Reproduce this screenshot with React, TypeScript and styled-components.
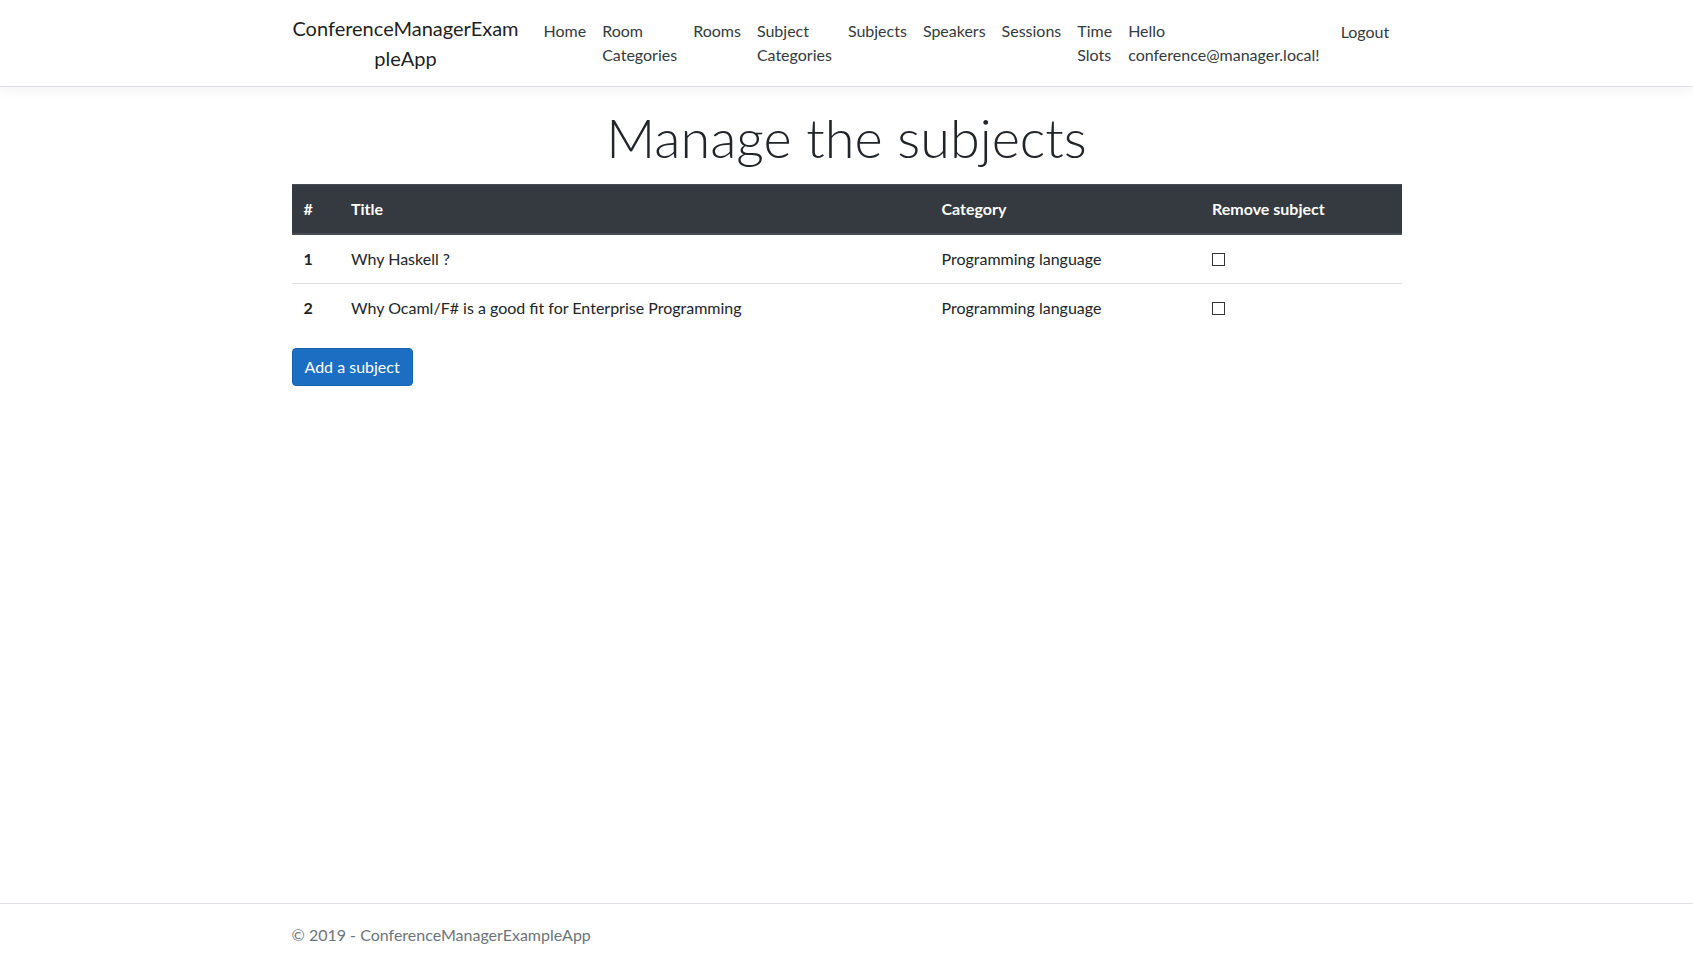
import React from "react";
import styled, { createGlobalStyle } from "styled-components";

const FONT = `"Segoe UI", Lato, "Liberation Sans", sans-serif`;

const GlobalStyle = createGlobalStyle`
  *, *::before, *::after { box-sizing: border-box; }
  html, body { margin: 0; padding: 0; }
  body {
    font-family: ${FONT};
    font-size: 16px;
    line-height: 1.5;
    color: #212529;
    background: #fff;
  }
`;

const Page = styled.div`
  min-height: 100vh;
  display: flex;
  flex-direction: column;
`;

const Container = styled.div`
  width: 100%;
  max-width: 1140px;
  margin: 0 auto;
  padding: 0 15px;
`;

const Navbar = styled.header`
  background: #fff;
  border-bottom: 1px solid #dee2e6;
  box-shadow: 0 4px 12px rgba(0, 0, 0, 0.05);
  margin-bottom: 16px;
  padding: 8px 16px;
`;

const NavInner = styled(Container)`
  display: flex;
  align-items: center;
`;

const Brand = styled.a`
  width: 228px;
  flex: none;
  margin-right: 16px;
  padding: 5px 0;
  font-size: 20px;
  line-height: 30px;
  text-align: center;
  color: rgba(0, 0, 0, 0.9);
  text-decoration: none;
`;

const NavList = styled.ul`
  display: flex;
  flex: 1;
  list-style: none;
  margin: 0;
  padding: 0;
`;

const UserList = styled.ul`
  display: flex;
  align-items: flex-start;
  list-style: none;
  margin: 0;
  padding: 0;
`;

const NavItem = styled.li`
  display: block;
`;

const NavLink = styled.a`
  display: block;
  padding: 8px;
  color: #343a40;
  text-decoration: none;
  line-height: 24px;
`;

const LogoutButton = styled.button`
  display: block;
  padding: 8px 12px 6px;
  margin: 0;
  border: 1px solid transparent;
  background: none;
  font-family: ${FONT};
  font-size: 16px;
  line-height: 24px;
  color: #343a40;
  cursor: pointer;
`;

const Main = styled(Container)`
  flex: 1;
  padding-bottom: 16px;
`;

const Title = styled.h1`
  margin: 0 0 13px;
  padding-top: 3px;
  text-align: center;
  font-size: 54px;
  font-weight: 300;
  line-height: 1.2;
  color: #212529;
`;

const Table = styled.table`
  width: 100%;
  table-layout: fixed;
  border-collapse: collapse;
  margin-bottom: 16px;
  color: #212529;
`;

const HeadCell = styled.th`
  padding: 12px;
  text-align: left;
  vertical-align: bottom;
  font-weight: 700;
  color: #fff;
  background: #343a40;
  border-top: 1px solid #454d55;
  border-bottom: 2px solid #454d55;
`;

const RowHead = styled.th`
  padding: 12px;
  text-align: left;
  vertical-align: top;
  font-weight: 700;
  border-top: 1px solid #dee2e6;
`;

const Cell = styled.td`
  padding: 12px;
  vertical-align: top;
  border-top: 1px solid #dee2e6;
`;

const Check = styled.input`
  appearance: none;
  -webkit-appearance: none;
  width: 13px;
  height: 13px;
  margin: 0;
  border: 1px solid #333;
  border-radius: 0;
  background: #fff;
  vertical-align: -1px;
`;

const PrimaryButton = styled.button`
  display: inline-block;
  padding: 6px 12px;
  font-family: ${FONT};
  font-size: 16px;
  line-height: 24px;
  color: #fff;
  background: #1b6ec2;
  border: 1px solid #1861ac;
  border-radius: 4px;
  cursor: pointer;
`;

const Footer = styled.footer`
  border-top: 1px solid #dee2e6;
  color: #6c757d;
  line-height: 60px;
  white-space: nowrap;
`;

const FooterInner = styled(Container)`
  padding-top: 2px;
  line-height: 58px;
`;

const subjects = [
  { id: 1, title: "Why Haskell ?", category: "Programming language" },
  {
    id: 2,
    title: "Why Ocaml/F# is a good fit for Enterprise Programming",
    category: "Programming language",
  },
];

export default function App() {
  return (
    <Page>
      <GlobalStyle />
      <Navbar>
        <NavInner>
          <Brand href="#">
            ConferenceManagerExam
            <br />
            pleApp
          </Brand>
          <NavList>
            <NavItem><NavLink href="#">Home</NavLink></NavItem>
            <NavItem><NavLink href="#">Room<br />Categories</NavLink></NavItem>
            <NavItem><NavLink href="#">Rooms</NavLink></NavItem>
            <NavItem><NavLink href="#">Subject<br />Categories</NavLink></NavItem>
            <NavItem><NavLink href="#">Subjects</NavLink></NavItem>
            <NavItem><NavLink href="#">Speakers</NavLink></NavItem>
            <NavItem><NavLink href="#">Sessions</NavLink></NavItem>
            <NavItem><NavLink href="#">Time<br />Slots</NavLink></NavItem>
          </NavList>
          <UserList>
            <NavItem><NavLink href="#">Hello<br />conference@manager.local!</NavLink></NavItem>
            <NavItem><LogoutButton type="button">Logout</LogoutButton></NavItem>
          </UserList>
        </NavInner>
      </Navbar>
      <Main>
        <Title>Manage the subjects</Title>
        <Table>
          <colgroup>
            <col style={{ width: 47.5 }} />
            <col style={{ width: 590.5 }} />
            <col style={{ width: 270.5 }} />
            <col />
          </colgroup>
          <thead>
            <tr>
              <HeadCell>#</HeadCell>
              <HeadCell>Title</HeadCell>
              <HeadCell>Category</HeadCell>
              <HeadCell>Remove subject</HeadCell>
            </tr>
          </thead>
          <tbody>
            {subjects.map((s) => (
              <tr key={s.id}>
                <RowHead scope="row">{s.id}</RowHead>
                <Cell>{s.title}</Cell>
                <Cell>{s.category}</Cell>
                <Cell><Check type="checkbox" /></Cell>
              </tr>
            ))}
          </tbody>
        </Table>
        <PrimaryButton type="button">Add a subject</PrimaryButton>
      </Main>
      <Footer>
        <FooterInner>© 2019 - ConferenceManagerExampleApp</FooterInner>
      </Footer>
    </Page>
  );
}
